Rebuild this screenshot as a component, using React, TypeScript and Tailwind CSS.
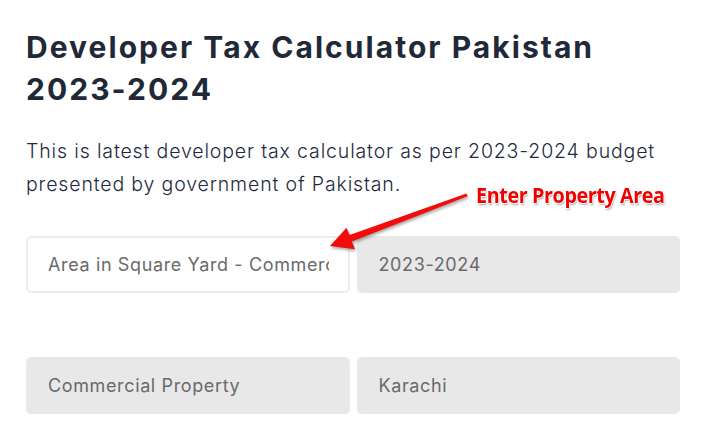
import React from "react";

function Arrow() {
  return (
    <svg
      className="absolute left-0 top-0 pointer-events-none"
      width="705"
      height="439"
      viewBox="0 0 705 439"
      style={{ filter: "drop-shadow(1px 2px 1.5px rgba(0,0,0,0.35))" }}
    >
      <polygon
        fill="#f20d0d"
        points="467.6,196.2 466.4,193.4 349.6,235.0 346.5,227.8 330,246 355,249.2 351.8,241.5"
      />
    </svg>
  );
}

function Field({ text, filled }: { text: string; filled?: boolean }) {
  return (
    <div
      className={
        filled
          ? "h-[57px] rounded-[5px] bg-[#e8e8e8] pl-[22px] pr-[21px] flex items-center overflow-hidden"
          : "h-[57px] rounded-[5px] bg-white border-2 border-[#ececec] pl-[20px] pr-[19px] flex items-center overflow-hidden"
      }
    >
      <span className="whitespace-nowrap overflow-hidden text-[18px] leading-[24px] text-[#6a6a6a] tracking-[0.035em]">
        {text}
      </span>
    </div>
  );
}

export default function App() {
  return (
    <div
      className="relative w-[705px] h-[439px] overflow-hidden bg-white"
      style={{ fontFamily: "Inter, 'Noto Sans', sans-serif" }}
    >
      <div className="pl-[26px] pr-[25px] pt-[26px]">
        <h1 className="text-[30px] leading-[42px] font-bold text-[#1f2937] tracking-[0.068em] whitespace-nowrap">
          Developer Tax Calculator Pakistan
          <br />
          2023-2024
        </h1>
        <p className="mt-[25px] text-[19.5px] leading-[33px] font-light text-[#1e2a3e] tracking-[0.044em] whitespace-nowrap">
          This is latest developer tax calculator as per 2023-2024 budget
          <br />
          presented by government of Pakistan.
        </p>
        <div className="mt-[35px] grid grid-cols-2 gap-x-[7px] gap-y-[64px]">
          <Field text="Area in Square Yard - Commercial" />
          <Field text="2023-2024" filled />
          <Field text="Commercial Property" filled />
          <Field text="Karachi" filled />
        </div>
      </div>
      <Arrow />
      <div
        className="absolute left-[476px] top-[181px] text-[21px] leading-[28px] font-bold text-[#f20000] whitespace-nowrap tracking-[-0.02em] origin-left scale-x-[0.94]"
        style={{
          fontFamily: "'Open Sans', sans-serif",
          textShadow:
            "1px 0 0 #fff, -1px 0 0 #fff, 0 1px 0 #fff, 0 -1px 0 #fff, 1px 2px 2px rgba(0,0,0,0.35)",
        }}
      >
        Enter Property Area
      </div>
    </div>
  );
}
